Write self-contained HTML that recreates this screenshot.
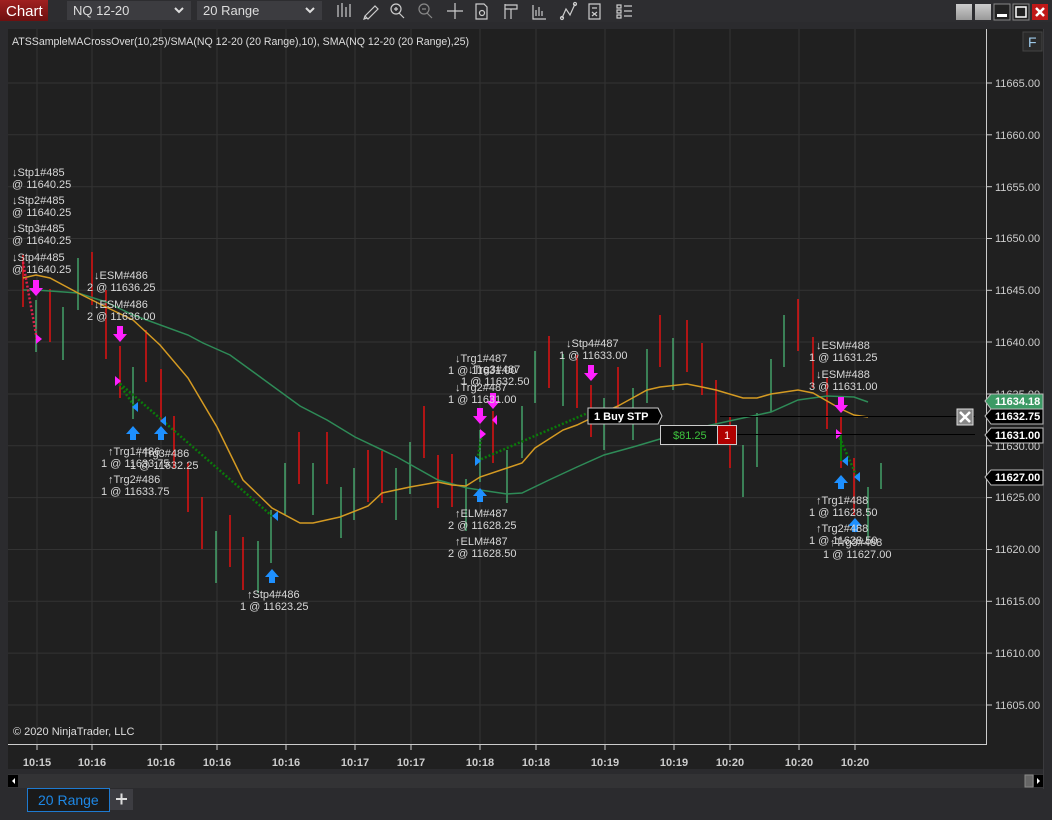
<!DOCTYPE html>
<html><head><meta charset="utf-8"><style>
html,body{margin:0;padding:0;background:#2b2b2e;width:1052px;height:820px;overflow:hidden;font-family:"Liberation Sans",sans-serif}
svg{display:block}
</style></head><body>
<svg width="1052" height="820" xmlns="http://www.w3.org/2000/svg" font-family="Liberation Sans, sans-serif">
<rect width="1052" height="820" fill="#2b2b2e"/>
<rect x="0" y="0" width="1052" height="22" fill="#2d2d30"/>
<defs><linearGradient id="rg" x1="0" y1="0" x2="0" y2="1"><stop offset="0" stop-color="#a02020"/><stop offset="1" stop-color="#6e1010"/></linearGradient>
<linearGradient id="gb" x1="0" y1="0" x2="0" y2="1"><stop offset="0" stop-color="#ccc"/><stop offset="1" stop-color="#999"/></linearGradient></defs>
<rect x="0" y="0" width="48" height="21" fill="url(#rg)"/>
<text x="6" y="16" fill="#fff" font-size="15">Chart</text>
<rect x="67" y="1" width="124" height="19" fill="#3c3c40"/>
<text x="73" y="15" fill="#ddd" font-size="13">NQ 12-20</text>
<path d="M175 8l4 4 4-4" stroke="#ddd" stroke-width="2" fill="none"/>
<rect x="197" y="1" width="125" height="19" fill="#3c3c40"/>
<text x="203" y="15" fill="#ddd" font-size="13">20 Range</text>
<path d="M306 8l4 4 4-4" stroke="#ddd" stroke-width="2" fill="none"/>
<g stroke="#ccc" stroke-width="1.2" fill="none">
<path d="M338 5v12M342 3v14M346 7v10M350 4v13"/>
<path d="M365 16l10-10 3 3-10 10zM365 16l-1 3 3-1"/>
<circle cx="396" cy="9" r="5"/><path d="M399 13l5 5M394 9h4M396 7v4"/>
<circle cx="424" cy="9" r="5" stroke="#888"/><path d="M427 13l5 5M422 9h4" stroke="#888"/>
<path d="M455 3v16M447 11h16"/>
<path d="M476 4h8l3 3v12h-11z"/><circle cx="482" cy="13" r="2.5"/>
<path d="M505 4v15M505 5h12v4h-12M511 9v10"/>
<path d="M533 5v14h13M536 16v-6M539 16v-9M542 16v-5"/>
<path d="M562 18l4-9 4 6 5-11"/><circle cx="562" cy="18" r="1.5"/><circle cx="575" cy="4" r="1.5"/>
<path d="M589 4h11v15h-11z M592 8h5M592 12l5 4M597 12l-5 4"/>
<path d="M617 5h4v3h-4zM617 10h4v3h-4zM617 15h4v3h-4zM624 6h8M624 11h8M624 16h8"/>
</g>
<rect x="956" y="4" width="16" height="16" fill="url(#gb)"/>
<rect x="975" y="4" width="16" height="16" fill="url(#gb)"/>
<rect x="994" y="4" width="16" height="16" fill="#222" stroke="#888"/><rect x="997" y="14" width="10" height="3" fill="#fff"/>
<rect x="1013" y="4" width="16" height="16" fill="#222" stroke="#888"/><rect x="1016" y="7" width="10" height="10" fill="none" stroke="#fff" stroke-width="1.5"/>
<rect x="1032" y="4" width="16" height="16" fill="#c01818"/><path d="M1036 8l8 8M1044 8l-8 8" stroke="#fff" stroke-width="2.5"/>
<rect x="8" y="29" width="1035" height="740" fill="#202020"/>
<line x1="1043.5" y1="29" x2="1043.5" y2="789" stroke="#3a3a3d"/>
<line x1="986.5" y1="29" x2="986.5" y2="744" stroke="#ccc"/>
<line x1="8" y1="744.5" x2="987" y2="744.5" stroke="#ccc"/>
<g stroke="#333" stroke-width="1">
<line x1="8" x2="986" y1="83" y2="83"/><line x1="8" x2="986" y1="134.8" y2="134.8"/><line x1="8" x2="986" y1="186.7" y2="186.7"/><line x1="8" x2="986" y1="238.5" y2="238.5"/><line x1="8" x2="986" y1="290.3" y2="290.3"/><line x1="8" x2="986" y1="342" y2="342"/><line x1="8" x2="986" y1="394" y2="394"/><line x1="8" x2="986" y1="445.8" y2="445.8"/><line x1="8" x2="986" y1="497.6" y2="497.6"/><line x1="8" x2="986" y1="549.5" y2="549.5"/><line x1="8" x2="986" y1="601.3" y2="601.3"/><line x1="8" x2="986" y1="653.1" y2="653.1"/><line x1="8" x2="986" y1="705" y2="705"/>
<line y1="29" y2="744" x1="37" x2="37"/><line y1="29" y2="744" x1="92" x2="92"/><line y1="29" y2="744" x1="161" x2="161"/><line y1="29" y2="744" x1="217" x2="217"/><line y1="29" y2="744" x1="286" x2="286"/><line y1="29" y2="744" x1="355" x2="355"/><line y1="29" y2="744" x1="411" x2="411"/><line y1="29" y2="744" x1="480" x2="480"/><line y1="29" y2="744" x1="536" x2="536"/><line y1="29" y2="744" x1="605" x2="605"/><line y1="29" y2="744" x1="674" x2="674"/><line y1="29" y2="744" x1="730" x2="730"/><line y1="29" y2="744" x1="799" x2="799"/><line y1="29" y2="744" x1="855" x2="855"/>
</g>
<g stroke="#ccc"><line x1="37" x2="37" y1="744" y2="750"/><line x1="92" x2="92" y1="744" y2="750"/><line x1="161" x2="161" y1="744" y2="750"/><line x1="217" x2="217" y1="744" y2="750"/><line x1="286" x2="286" y1="744" y2="750"/><line x1="355" x2="355" y1="744" y2="750"/><line x1="411" x2="411" y1="744" y2="750"/><line x1="480" x2="480" y1="744" y2="750"/><line x1="536" x2="536" y1="744" y2="750"/><line x1="605" x2="605" y1="744" y2="750"/><line x1="674" x2="674" y1="744" y2="750"/><line x1="730" x2="730" y1="744" y2="750"/><line x1="799" x2="799" y1="744" y2="750"/><line x1="855" x2="855" y1="744" y2="750"/></g>
<g fill="#ccc" font-size="11" font-weight="bold" text-anchor="middle">
<text x="37" y="766">10:15</text><text x="92" y="766">10:16</text><text x="161" y="766">10:16</text><text x="217" y="766">10:16</text><text x="286" y="766">10:16</text><text x="355" y="766">10:17</text><text x="411" y="766">10:17</text><text x="480" y="766">10:18</text><text x="536" y="766">10:18</text><text x="605" y="766">10:19</text><text x="674" y="766">10:19</text><text x="730" y="766">10:20</text><text x="799" y="766">10:20</text><text x="855" y="766">10:20</text>
</g>
<g stroke="#ccc"><line x1="986" x2="992" y1="83" y2="83"/><line x1="986" x2="992" y1="134.8" y2="134.8"/><line x1="986" x2="992" y1="186.7" y2="186.7"/><line x1="986" x2="992" y1="238.5" y2="238.5"/><line x1="986" x2="992" y1="290.3" y2="290.3"/><line x1="986" x2="992" y1="342" y2="342"/><line x1="986" x2="992" y1="394" y2="394"/><line x1="986" x2="992" y1="445.8" y2="445.8"/><line x1="986" x2="992" y1="497.6" y2="497.6"/><line x1="986" x2="992" y1="549.5" y2="549.5"/><line x1="986" x2="992" y1="601.3" y2="601.3"/><line x1="986" x2="992" y1="653.1" y2="653.1"/><line x1="986" x2="992" y1="705" y2="705"/></g>
<g fill="#ccc" font-size="11">
<text x="995" y="87">11665.00</text><text x="995" y="139">11660.00</text><text x="995" y="191">11655.00</text><text x="995" y="242">11650.00</text><text x="995" y="294">11645.00</text><text x="995" y="346">11640.00</text><text x="995" y="398">11635.00</text><text x="995" y="450">11630.00</text><text x="995" y="501">11625.00</text><text x="995" y="553">11620.00</text><text x="995" y="605">11615.00</text><text x="995" y="657">11610.00</text><text x="995" y="709">11605.00</text>
</g>
<rect x="1023" y="32" width="19" height="19" fill="#2a2a2a" stroke="#444"/>
<text x="1028" y="47" fill="#9cc8e8" font-size="14">F</text>
<text x="12" y="45" fill="#ddd" font-size="11" textLength="457" lengthAdjust="spacingAndGlyphs">ATSSampleMACrossOver(10,25)/SMA(NQ 12-20 (20 Range),10), SMA(NQ 12-20 (20 Range),25)</text>
<text x="13" y="735" fill="#ddd" font-size="11">© 2020 NinjaTrader, LLC</text>
<g stroke="#ff1010" stroke-width="1.3">
<line x1="23" x2="23" y1="255" y2="307"/><line x1="50" x2="50" y1="289" y2="342"/><line x1="92" x2="92" y1="252" y2="305"/><line x1="106" x2="106" y1="290" y2="359"/><line x1="120" x2="120" y1="346" y2="398"/><line x1="146" x2="146" y1="330" y2="382"/><line x1="161" x2="161" y1="369" y2="421"/><line x1="174" x2="174" y1="416" y2="468"/><line x1="188" x2="188" y1="462" y2="512"/><line x1="202" x2="202" y1="497" y2="549"/><line x1="230" x2="230" y1="515" y2="567"/><line x1="243" x2="243" y1="537" y2="590"/><line x1="299" x2="299" y1="432" y2="484"/><line x1="327" x2="327" y1="432" y2="484"/><line x1="368" x2="368" y1="450" y2="502"/><line x1="424" x2="424" y1="406" y2="458"/><line x1="438" x2="438" y1="455" y2="508"/><line x1="452" x2="452" y1="454" y2="507"/><line x1="493" x2="493" y1="411" y2="463"/><line x1="549" x2="549" y1="336" y2="388"/><line x1="577" x2="577" y1="355" y2="408"/><line x1="591" x2="591" y1="385" y2="437"/><line x1="618" x2="618" y1="367" y2="420"/><line x1="660" x2="660" y1="315" y2="367"/><line x1="687" x2="687" y1="320" y2="372"/><line x1="702" x2="702" y1="343" y2="395"/><line x1="716" x2="716" y1="380" y2="433"/><line x1="730" x2="730" y1="417" y2="468"/><line x1="798" x2="798" y1="299" y2="351"/><line x1="813" x2="813" y1="337" y2="388"/><line x1="827" x2="827" y1="378" y2="429"/><line x1="841" x2="841" y1="417" y2="468"/><line x1="854" x2="854" y1="458" y2="515"/><line x1="382" x2="382" y1="451" y2="503"/>
</g>
<g stroke="#4cc07a" stroke-width="1.2">
<line x1="36" x2="36" y1="300" y2="352"/><line x1="63" x2="63" y1="307" y2="360"/><line x1="78" x2="78" y1="258" y2="310"/><line x1="133" x2="133" y1="367" y2="419"/><line x1="216" x2="216" y1="531" y2="583"/><line x1="258" x2="258" y1="541" y2="593"/><line x1="271" x2="271" y1="510" y2="563"/><line x1="285" x2="285" y1="463" y2="515"/><line x1="313" x2="313" y1="463" y2="515"/><line x1="341" x2="341" y1="487" y2="538"/><line x1="354" x2="354" y1="468" y2="520"/><line x1="396" x2="396" y1="468" y2="520"/><line x1="410" x2="410" y1="442" y2="494"/><line x1="466" x2="466" y1="479" y2="531"/><line x1="480" x2="480" y1="430" y2="482"/><line x1="507" x2="507" y1="450" y2="503"/><line x1="522" x2="522" y1="406" y2="458"/><line x1="535" x2="535" y1="351" y2="403"/><line x1="563" x2="563" y1="354" y2="406"/><line x1="604" x2="604" y1="398" y2="450"/><line x1="633" x2="633" y1="388" y2="440"/><line x1="647" x2="647" y1="349" y2="403"/><line x1="673" x2="673" y1="338" y2="390"/><line x1="743" x2="743" y1="445" y2="497"/><line x1="757" x2="757" y1="413" y2="467"/><line x1="771" x2="771" y1="359" y2="412"/><line x1="784" x2="784" y1="315" y2="367"/><line x1="868" x2="868" y1="487" y2="540"/><line x1="881" x2="881" y1="463" y2="489"/>
</g>
<polyline fill="none" stroke="#2e8b57" stroke-width="1.5" points="23,290 36,290 78,293 106,302 133,315 188,335 203,343 230,355 300,406 327,420 355,437 397,457 438,480 467,488 480,490 507,494 522,493 549,480 577,467 604,455 633,447 660,439 702,427 743,418 771,412 798,400 827,396 854,397 868,402"/>
<polyline fill="none" stroke="#d49a22" stroke-width="1.5" points="23,278 36,275 50,278 78,293 106,307 133,320 160,345 188,378 217,427 243,480 272,508 300,523 313,523 340,517 368,506 382,493 410,487 438,482 452,485 466,486 480,477 507,468 522,463 535,448 563,430 577,425 604,412 618,406 647,390 660,387 687,384 702,387 716,390 743,398 757,398 771,394 798,390 813,393 841,409 854,415 868,417"/>
<g fill="none" stroke-dasharray="2,2" stroke-width="2.5">
<path d="M23 262L37 340" stroke="#e0204a"/>
<path d="M117 381L135 407M117 381L163 421L272 516M482 434L477 461L590 412M838 434L857 477" stroke="#0a7a0a"/>
</g>
<line x1="841" y1="434" x2="841" y2="461" stroke="#0a7a0a" stroke-width="2"/>
<g fill="#ff20ff">
<path d="M33 280h6v8h4l-7 8-7-8h4z"/><path d="M117 326h6v8h4l-7 8-7-8h4z"/><path d="M477 408h6v8h4l-7 8-7-8h4z"/><path d="M490 393h6v8h4l-7 8-7-8h4z"/><path d="M588 365h6v8h4l-7 8-7-8h4z"/><path d="M838 397h6v8h4l-7 8-7-8h4z"/>
<path d="M36 334l6 5-6 5z"/><path d="M115 376l6 5-6 5z"/><path d="M480 429l6 5-6 5z"/><path d="M836 429l6 5-6 5z"/><path d="M497 415l-5 5 5 5z"/>
</g>
<g fill="#1e90ff">
<path d="M130 440h6v-6h4l-7-8-7 8h4z"/><path d="M158 440h6v-6h4l-7-8-7 8h4z"/><path d="M269 583h6v-6h4l-7-8-7 8h4z"/><path d="M477 502h6v-6h4l-7-8-7 8h4z"/><path d="M838 489h6v-6h4l-7-8-7 8h4z"/><path d="M852 532h6v-6h4l-7-8-7 8h4z"/>
<path d="M138 402l-6 5 6 5z"/><path d="M166 416l-6 5 6 5z"/><path d="M278 511l-6 5 6 5z"/><path d="M475 456l6 5-6 5z"/><path d="M848 456l-6 5 6 5z"/><path d="M860 472l-6 5 6 5z"/>
</g>
<g fill="#d8d8d8" font-size="11">
<text x="12" y="176">↓Stp1#485</text><text x="12" y="188">@ 11640.25</text>
<text x="12" y="204">↓Stp2#485</text><text x="12" y="216">@ 11640.25</text>
<text x="12" y="232">↓Stp3#485</text><text x="12" y="244">@ 11640.25</text>
<text x="12" y="261">↓Stp4#485</text><text x="12" y="273">@ 11640.25</text>
<text x="94" y="279">↓ESM#486</text><text x="87" y="291">2 @ 11636.25</text>
<text x="94" y="308">↓ESM#486</text><text x="87" y="320">2 @ 11636.00</text>
<text x="108" y="455">↑Trg1#486</text><text x="101" y="467">1 @ 11633.75</text>
<text x="137" y="457">↑Trg3#486</text><text x="130" y="469">1 @ 11632.25</text>
<text x="108" y="483">↑Trg2#486</text><text x="101" y="495">1 @ 11633.75</text>
<text x="247" y="598">↑Stp4#486</text><text x="240" y="610">1 @ 11623.25</text>
<text x="455" y="362">↓Trg1#487</text><text x="448" y="374">1 @ 11631.00</text>
<text x="468" y="373">↓Trg3#487</text><text x="461" y="385">1 @ 11632.50</text>
<text x="455" y="391">↓Trg2#487</text><text x="448" y="403">1 @ 11631.00</text>
<text x="566" y="347">↓Stp4#487</text><text x="559" y="359">1 @ 11633.00</text>
<text x="455" y="517">↑ELM#487</text><text x="448" y="529">2 @ 11628.25</text>
<text x="455" y="545">↑ELM#487</text><text x="448" y="557">2 @ 11628.50</text>
<text x="816" y="349">↓ESM#488</text><text x="809" y="361">1 @ 11631.25</text>
<text x="816" y="378">↓ESM#488</text><text x="809" y="390">3 @ 11631.00</text>
<text x="816" y="504">↑Trg1#488</text><text x="809" y="516">1 @ 11628.50</text>
<text x="816" y="532">↑Trg2#488</text><text x="809" y="544">1 @ 11628.50</text>
<text x="830" y="546">↑Trg3#488</text><text x="823" y="558">1 @ 11627.00</text>
</g>
<line x1="720" y1="416.5" x2="975" y2="416.5" stroke="#000"/>
<line x1="737" y1="434.5" x2="975" y2="434.5" stroke="#000"/>
<path d="M588 408h70l4 8-4 8h-70z" fill="#000" stroke="#ccc"/>
<text x="594" y="420" fill="#fff" font-size="11" font-weight="bold">1  Buy STP</text>
<rect x="660.5" y="425.5" width="57" height="19" fill="#111" stroke="#ccc"/>
<text x="673" y="439" fill="#3ec43e" font-size="11">$81.25</text>
<rect x="717.5" y="425.5" width="19" height="19" fill="#b00000" stroke="#ccc"/>
<text x="724" y="439" fill="#fff" font-size="11">1</text>
<rect x="957" y="409" width="16" height="16" fill="#888" stroke="#ddd"/>
<path d="M960 412l10 10M970 412l-10 10" stroke="#fff" stroke-width="2.5"/>
<g font-size="11" font-weight="bold">
<path d="M985 401l6-7h52v15h-52z" fill="#3c9a65" stroke="#bbb"/><text x="995" y="405" fill="#fff">11634.18</text>
<path d="M985 416l6-7h52v15h-52z" fill="#000" stroke="#bbb"/><text x="995" y="420" fill="#fff">11632.75</text>
<path d="M985 435l6-7h52v15h-52z" fill="#000" stroke="#bbb"/><text x="995" y="439" fill="#fff">11631.00</text>
<path d="M985 477l6-7h52v15h-52z" fill="#000" stroke="#bbb"/><text x="995" y="481" fill="#fff">11627.00</text>
</g>
<rect x="8" y="774" width="1035" height="14" fill="#333335"/>
<rect x="8" y="775" width="10" height="12" fill="#000"/><path d="M15 778l-3 3 3 3z" fill="#fff"/>
<rect x="1025" y="775" width="8" height="12" fill="#666" stroke="#888"/>
<rect x="1034" y="775" width="9" height="12" fill="#000"/><path d="M1037 778l3 3-3 3z" fill="#fff"/>
<rect x="27.5" y="788.5" width="82" height="23" fill="#1a1a1a" stroke="#1e7ad0"/>
<text x="38" y="805" fill="#1e88e5" font-size="14">20 Range</text>
<rect x="110" y="789" width="23" height="21" fill="#3d3d42"/>
<path d="M116 799h11M121.5 793.5v11" stroke="#ddd" stroke-width="2"/>
</svg>
</body></html>
